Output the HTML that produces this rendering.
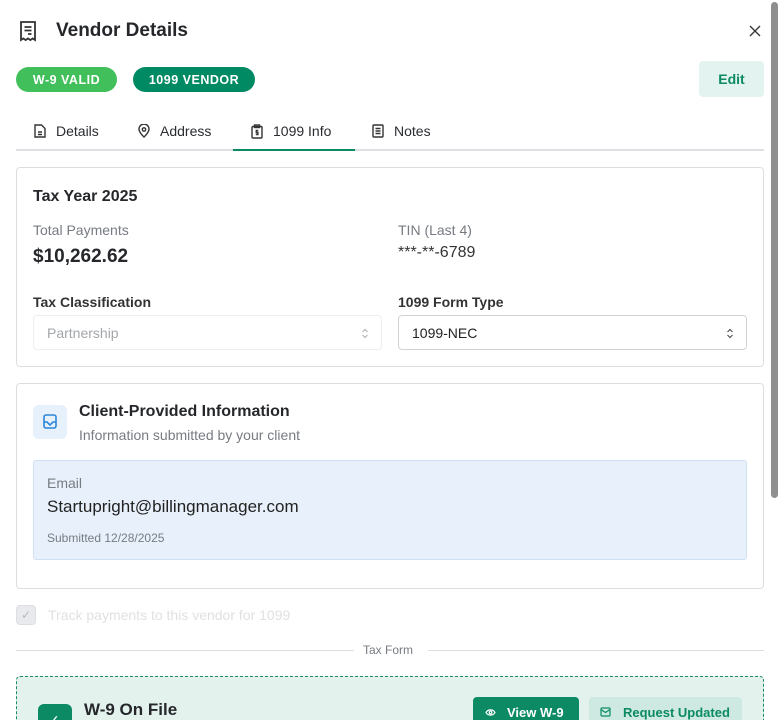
<!DOCTYPE html>
<html style="overflow:hidden;height:720px"><head><style>
*{box-sizing:border-box;margin:0;padding:0}
body{width:780px;height:720px;overflow:hidden;background:#fff;font-family:"Liberation Sans",sans-serif;color:#25272b}
#w{position:relative;width:780px;height:720px;overflow:hidden}
.a{position:absolute}
.badge{position:absolute;height:25px;border-radius:13px;color:#fff;font-weight:bold;font-size:12.5px;letter-spacing:.5px;display:flex;align-items:center;justify-content:center}
.card{position:absolute;left:16px;width:748px;border:1px solid #dcdde1;border-radius:4px}
.lbl{font-size:14px;color:#777b82}
.sel{position:absolute;height:35px;border-radius:4px;font-size:14px;display:flex;align-items:center;padding-left:13px}
.tab{position:absolute;top:123px;font-size:14px;color:#2a2c30;display:flex;align-items:center;gap:10px}
</style></head><body><div id="w">
<svg class="a" style="left:19px;top:21px" width="18" height="21" viewBox="0 0 18 21" fill="none" stroke="#333" stroke-width="1.8"><path d="M2 1h14v18l-2.3-1.5-2.3 1.5-2.4-1.5-2.3 1.5-2.4-1.5L2 19z"/><path d="M5.5 6h7M5.5 9.5h7M9 13h3.5"/></svg>
<div class="a" style="left:56px;top:20px;font-size:19px;font-weight:bold">Vendor Details</div>
<svg class="a" style="left:749px;top:25px" width="12" height="12" viewBox="0 0 12 12" stroke="#333" stroke-width="1.3"><path d="M1 1l10 10M11 1L1 11"/></svg>
<div class="a" style="left:771px;top:2px;width:7px;height:496px;background:#8f8f8f;border-radius:4px"></div>
<div class="badge" style="left:16px;top:67px;width:101px;background:#41bf5b">W-9 VALID</div>
<div class="badge" style="left:133px;top:67px;width:122px;background:#008a63">1099 VENDOR</div>
<div class="a" style="left:699px;top:61px;width:65px;height:36px;border-radius:4px;background:#e3f3ef;color:#0b8a63;font-weight:bold;font-size:14px;display:flex;align-items:center;justify-content:center">Edit</div>
<div class="tab" style="left:34px"><svg width="12" height="14" viewBox="0 0 12 14" fill="none" stroke="#333" stroke-width="1.4"><path d="M1 1h6.5L11 4.5V13H1z M4 8h4M4 10.5h4"/></svg>Details</div>
<div class="tab" style="left:138px"><svg width="12" height="14" viewBox="0 0 12 14" fill="none" stroke="#333" stroke-width="1.4"><path d="M6 13s-5-4.5-5-8a5 5 0 0110 0c0 3.5-5 8-5 8z"/><circle cx="6" cy="5.5" r="1.7"/></svg>Address</div>
<div class="tab" style="left:251px"><svg width="12" height="15" viewBox="0 0 12 15" fill="none" stroke="#333" stroke-width="1.4"><rect x="1" y="2.5" width="10" height="11.5" rx="1"/><rect x="3.5" y="1" width="5" height="2.5"/><path d="M7.3 6.5H5.3v2h1.6v2H4.8"/></svg>1099 Info</div>
<div class="tab" style="left:372px"><svg width="12" height="14" viewBox="0 0 12 14" fill="none" stroke="#333" stroke-width="1.4"><rect x="1" y="1" width="10" height="12" rx="1"/><path d="M3.5 4.5h5M3.5 7h5M3.5 9.5h5"/></svg>Notes</div>
<div class="a" style="left:16px;top:149px;width:748px;height:2px;background:#dee0e3"></div>
<div class="a" style="left:233px;top:149px;width:122px;height:2px;background:#0b8a63"></div>

<div class="card" style="top:167px;height:200px">
<div class="a" style="left:16px;top:20px;font-size:16px;font-weight:bold">Tax Year 2025</div>
<div class="a lbl" style="left:16px;top:54px">Total Payments</div>
<div class="a" style="left:16px;top:78px;font-size:19px;font-weight:bold">$10,262.62</div>
<div class="a lbl" style="left:381px;top:54px">TIN (Last 4)</div>
<div class="a" style="left:381px;top:76px;font-size:16px;color:#333">***-**-6789</div>
<div class="a" style="left:16px;top:126px;font-size:14px;font-weight:bold;color:#333">Tax Classification</div>
<div class="a" style="left:381px;top:126px;font-size:14px;font-weight:bold;color:#333">1099 Form Type</div>
<div class="sel" style="left:16px;top:147px;width:349px;border:1px solid #eceef0;color:#a3a6ab">Partnership<svg class="a" style="right:12px;top:12px" width="8" height="11" viewBox="0 0 8 11" fill="none" stroke="#b5b8bc" stroke-width="1.2"><path d="M1.5 4L4 1.5 6.5 4M1.5 7L4 9.5 6.5 7"/></svg></div>
<div class="sel" style="left:381px;top:147px;width:349px;border:1px solid #cfd2d6;color:#222">1099-NEC<svg class="a" style="right:12px;top:12px" width="8" height="11" viewBox="0 0 8 11" fill="none" stroke="#555" stroke-width="1.2"><path d="M1.5 4L4 1.5 6.5 4M1.5 7L4 9.5 6.5 7"/></svg></div>
</div>

<div class="card" style="top:383px;height:206px">
<div class="a" style="left:16px;top:21px;width:34px;height:34px;border-radius:6px;background:#e6f1fc"></div>
<svg class="a" style="left:26px;top:30px" width="14" height="15" viewBox="0 0 14 15" fill="none" stroke="#2b86d8" stroke-width="1.6"><rect x="1" y="1" width="12" height="13" rx="2"/><path d="M1 8h3l3 3 3-3h3"/></svg>
<div class="a" style="left:62px;top:19px;font-size:16px;font-weight:bold">Client-Provided Information</div>
<div class="a lbl" style="left:62px;top:43px">Information submitted by your client</div>
<div class="a" style="left:16px;top:76px;width:714px;height:100px;background:#e8f1fb;border:1px solid #cfe0f2;border-radius:3px">
<div class="a lbl" style="left:13px;top:14px">Email</div>
<div class="a" style="left:13px;top:36px;font-size:17px;color:#222">Startupright@billingmanager.com</div>
<div class="a" style="left:13px;top:70px;font-size:12px;color:#777b82">Submitted 12/28/2025</div>
</div>
</div>

<div class="a" style="left:16px;top:605px;width:20px;height:20px;border-radius:4px;background:#e8eaed;border:1px solid #dcdee1;color:#b4b7bb;font-size:12px;text-align:center;line-height:18px">✓</div>
<div class="a" style="left:48px;top:607px;font-size:14px;color:#dfe1e4">Track payments to this vendor for 1099</div>
<div class="a" style="left:16px;top:650px;width:338px;height:1px;background:#dcdee2"></div>
<div class="a" style="left:428px;top:650px;width:336px;height:1px;background:#dcdee2"></div>
<div class="a" style="left:363px;top:643px;font-size:12px;color:#777b82">Tax Form</div>

<div class="a" style="left:16px;top:676px;width:748px;height:44px;background:#e4f2ee;border:1.5px dashed #1a8a6a;border-bottom:none;border-radius:4px 4px 0 0"></div>
<div class="a" style="left:38px;top:704px;width:34px;height:16px;border-radius:6px 6px 0 0;background:#0b8a63;overflow:hidden"><span class="a" style="left:10px;top:9px;color:#fff;font-size:14px;line-height:14px">✓</span></div>
<div class="a" style="left:84px;top:700px;font-size:17px;font-weight:bold;line-height:20px">W-9 On File</div>
<div class="a" style="left:473px;top:697px;width:106px;height:23px;border-radius:4px 4px 0 0;background:#0b8a63;color:#fff;font-size:13px;font-weight:bold;padding:8px 0 0 34px;line-height:15px">View W-9</div>
<svg class="a" style="left:485px;top:708px" width="11" height="9" viewBox="0 0 11 9" fill="none" stroke="#fff" stroke-width="1.2"><path d="M1 4.5C3 1 8 1 10 4.5 8 8 3 8 1 4.5z"/><circle cx="5.5" cy="4.5" r="1.3"/></svg>
<div class="a" style="left:589px;top:697px;width:153px;height:23px;border-radius:4px 4px 0 0;background:#cde9e1;color:#0b8a63;font-size:13px;font-weight:bold;padding:8px 0 0 34px;line-height:15px">Request Updated</div>
<svg class="a" style="left:600px;top:707px" width="11" height="10" viewBox="0 0 11 10" fill="none" stroke="#0b8a63" stroke-width="1.2"><rect x="1" y="1" width="9" height="8" rx="1"/><path d="M1 2.5l4.5 3 4.5-3"/></svg>
</div></body></html>
